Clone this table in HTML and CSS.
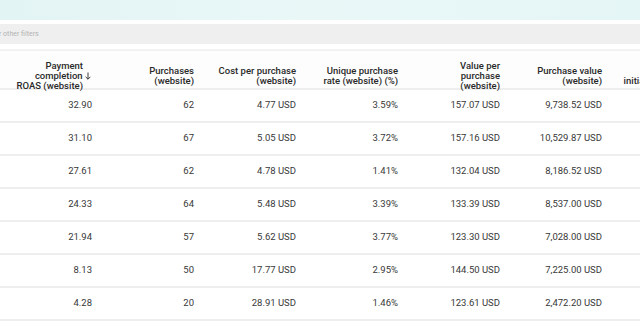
FILE: index.html
```html
<!DOCTYPE html>
<html>
<head>
<meta charset="utf-8">
<link rel="stylesheet" href="styles.css">
</head>
<body>
<div class="page">
  <div class="banner"></div>
  <div class="filter-wrap">
    <div class="filter">r other filters</div>
  </div>
  <div class="table">
    <div class="row head">
      <div class="cell c1"><span class="l1">Payment</span><span class="l2">completion <svg class="arrow" width="6" height="8" viewBox="0 0 6 8"><path d="M3 0.5V7.2M0.6 4.8L3 7.2L5.4 4.8" fill="none" stroke="#2a2a2a" stroke-width="0.9"/></svg></span><span class="l3">ROAS (website)</span></div>
      <div class="cell">Purchases<br>(website)</div>
      <div class="cell">Cost per purchase<br>(website)</div>
      <div class="cell">Unique purchase<br>rate (website) (%)</div>
      <div class="cell">Value per<br>purchase<br>(website)</div>
      <div class="cell">Purchase value<br>(website)</div>
      <div class="cell last">Checkouts<br>initiated (website)</div>
    </div>
    <div class="row"><div class="cell">32.90</div><div class="cell">62</div><div class="cell">4.77 USD</div><div class="cell">3.59%</div><div class="cell">157.07 USD</div><div class="cell">9,738.52 USD</div><div class="cell last"></div></div>
    <div class="row"><div class="cell">31.10</div><div class="cell">67</div><div class="cell">5.05 USD</div><div class="cell">3.72%</div><div class="cell">157.16 USD</div><div class="cell">10,529.87 USD</div><div class="cell last"></div></div>
    <div class="row"><div class="cell">27.61</div><div class="cell">62</div><div class="cell">4.78 USD</div><div class="cell">1.41%</div><div class="cell">132.04 USD</div><div class="cell">8,186.52 USD</div><div class="cell last"></div></div>
    <div class="row"><div class="cell">24.33</div><div class="cell">64</div><div class="cell">5.48 USD</div><div class="cell">3.39%</div><div class="cell">133.39 USD</div><div class="cell">8,537.00 USD</div><div class="cell last"></div></div>
    <div class="row"><div class="cell">21.94</div><div class="cell">57</div><div class="cell">5.62 USD</div><div class="cell">3.77%</div><div class="cell">123.30 USD</div><div class="cell">7,028.00 USD</div><div class="cell last"></div></div>
    <div class="row"><div class="cell">8.13</div><div class="cell">50</div><div class="cell">17.77 USD</div><div class="cell">2.95%</div><div class="cell">144.50 USD</div><div class="cell">7,225.00 USD</div><div class="cell last"></div></div>
    <div class="row"><div class="cell">4.28</div><div class="cell">20</div><div class="cell">28.91 USD</div><div class="cell">1.46%</div><div class="cell">123.61 USD</div><div class="cell">2,472.20 USD</div><div class="cell last"></div></div>
  </div>
</div>
</body>
</html>
```

FILE: styles.css
```css
html, body {
  margin: 0;
  padding: 0;
  background: #ffffff;
}
.page {
  width: 640px;
  height: 321px;
  overflow: hidden;
  font-family: Roboto, "Liberation Sans", sans-serif;
  color: #383838;
}
.banner {
  height: 20px;
  background: linear-gradient(90deg, #e3f4f4 0%, #e9f7f7 50%, #e5f6f6 100%);
}
.filter-wrap {
  padding: 4px 0 5px 0;
  border-bottom: 1px solid #f3f3f3;
}
.filter {
  height: 20px;
  background: #efefef;
  font-size: 7px;
  line-height: 20px;
  color: #b3b3b3;
  margin-left: -1px;
}
.table {
  display: flex;
  flex-direction: column;
  border-top: 1px solid #f0f0f0;
}
.row {
  display: grid;
  grid-template-columns: 92px 102px 102px 102px 102px 102px 98px;
  height: 31px;
  border-bottom: 2px solid #eeeeee;
  font-size: 9.5px;
  align-items: center;
}
.row .cell {
  text-align: right;
  white-space: nowrap;
  padding-bottom: 3px;
}
.row.head {
  height: 27px;
  padding-top: 10px;
  background: #fdfdfd;
  font-weight: 500;
  color: #2a2a2a;
  line-height: 9.8px;
}
.row.head .cell {
  padding-bottom: 0;
}
.c1 span.l1, .c1 span.l2, .c1 span.l3 {
  display: block;
}
.c1 .l1 { padding-right: 9px; }
.c1 .l2 { padding-right: 1px; }
.c1 .l3 { padding-right: 9px; }
.arrow {
  display: inline-block;
  vertical-align: -1px;
}
.cell.last {
  overflow: visible;
}
```
